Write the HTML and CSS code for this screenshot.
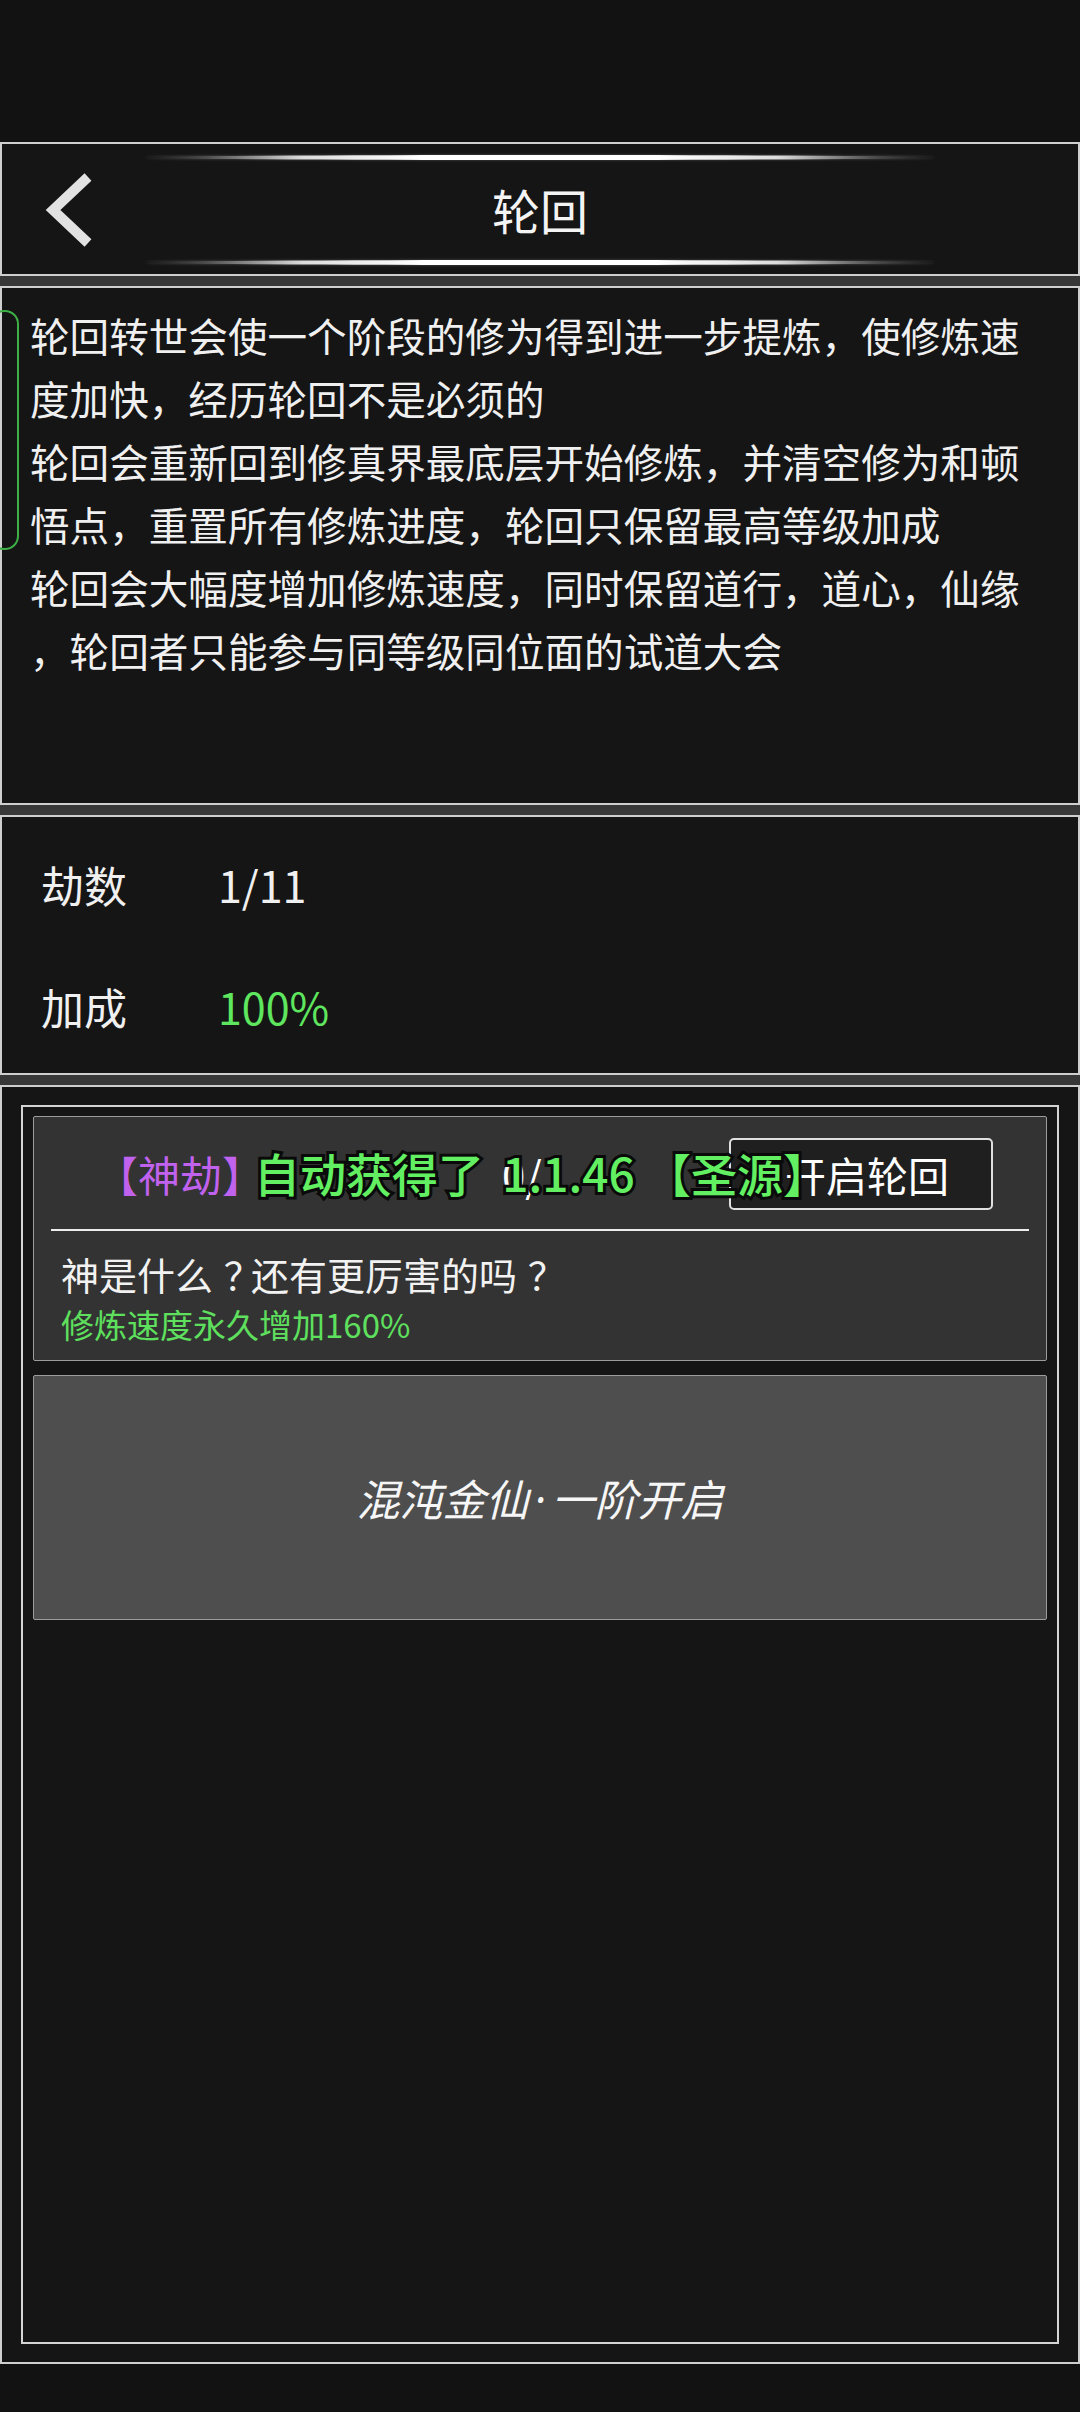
FILE: index.html
```html
<!DOCTYPE html>
<html lang="zh-CN">
<head>
<meta charset="utf-8">
<title>轮回</title>
<link rel="stylesheet" href="styles.css">
</head>
<body>
<div class="screen">
  <div class="status-space"></div>

  <header class="panel header">
    <div class="glow"></div>
    <div class="title-row">
      <div class="back">
        <svg width="60" height="80" viewBox="0 0 60 80">
          <polyline points="48,7 13,40 48,73" fill="none" stroke="#e2e2e2" stroke-width="10" stroke-linejoin="miter" stroke-linecap="butt"/>
        </svg>
      </div>
      <div class="title">轮回</div>
      <div></div>
    </div>
    <div class="glow"></div>
  </header>

  <div class="gap"></div>

  <section class="panel desc">
    <div class="bracket"></div>
    <p class="desc-text">轮回转世会使一个阶段的修为得到进一步提炼，使修炼速<br>度加快，经历轮回不是必须的<br>轮回会重新回到修真界最底层开始修炼，并清空修为和顿<br>悟点，重置所有修炼进度，轮回只保留最高等级加成<br>轮回会大幅度增加修炼速度，同时保留道行，道心，仙缘<br>，轮回者只能参与同等级同位面的试道大会</p>
  </section>

  <div class="gap"></div>

  <section class="panel stats">
    <div class="stat-row"><span class="stat-label">劫数</span><span class="stat-value">1/11</span></div>
    <div class="stat-row"><span class="stat-label">加成</span><span class="stat-value green">100%</span></div>
  </section>

  <div class="gap"></div>

  <section class="panel main">
    <div class="frame">
      <div class="card card-info">
        <div class="card-head">
          <span class="tag">【神劫】</span>
          <span class="count">0/1</span>
          <button class="btn">开启轮回</button>
          <div class="toast">自动获得了 <span class="toast-num">1.1.46</span> 【圣源】</div>
        </div>
        <div class="divider"></div>
        <div class="question">神是什<span class="pre-qm">么</span><span class="qm">？</span>还有更厉害的<span class="pre-qm">吗</span><span class="qm">？</span></div>
        <div class="bonus">修炼速度永久增加160%</div>
      </div>
      <div class="card card-level">
        <span class="level-text">混沌金仙<span class="dot">·</span>一阶开启</span>
      </div>
    </div>
  </section>
</div>
</body>
</html>
```

FILE: styles.css
```css
* { box-sizing: border-box; }

html, body {
  margin: 0;
  padding: 0;
  background: #121212;
}

body {
  width: 1080px;
  height: 2412px;
  overflow: hidden;
  font-family: "Noto Sans CJK SC", "Noto Sans", sans-serif;
  color: #f2f2f2;
}

.screen {
  display: flex;
  flex-direction: column;
}

.status-space {
  height: 142px;
}

.panel {
  border: 2px solid #cfcfcf;
  background: #151515;
  position: relative;
}

.gap {
  height: 10px;
  background: #383838;
}

/* header */
.header {
  height: 134px;
  padding-top: 11px;
  display: flex;
  flex-direction: column;
}

.glow {
  width: 790px;
  height: 5px;
  margin: 0 auto;
  border-radius: 50%;
  background: linear-gradient(90deg,
    rgba(255,255,255,0) 0%,
    rgba(255,255,255,0.25) 8%,
    rgba(255,255,255,0.85) 20%,
    #ffffff 35%,
    #ffffff 65%,
    rgba(255,255,255,0.85) 80%,
    rgba(255,255,255,0.25) 92%,
    rgba(255,255,255,0) 100%);
  box-shadow: 0 0 3px rgba(255,255,255,0.25);
}

.title-row {
  height: 100px;
  display: grid;
  grid-template-columns: 1fr auto 1fr;
  align-items: center;
}

.back {
  padding-left: 38px;
  display: flex;
  align-items: center;
}

.back svg { display: block; }

.title {
  font-size: 48px;
  line-height: 1;
  color: #f4f4f4;
  padding-bottom: 2px;
}

/* description */
.desc {
  height: 519px;
  padding: 15px 0 0 28px;
}

.bracket {
  position: absolute;
  left: -12px;
  top: 22px;
  width: 29px;
  height: 240px;
  border: 2px solid #3daf45;
  border-radius: 14px;
}

.desc-text {
  margin: 0;
  font-size: 39.6px;
  line-height: 63px;
  white-space: nowrap;
  color: #f0f0f0;
}

/* stats */
.stats {
  height: 260px;
  padding: 37px 0 37px 39px;
  display: flex;
  flex-direction: column;
  gap: 62px;
}

.stat-row {
  display: flex;
  align-items: center;
  height: 60px;
  font-size: 43px;
}

.stat-label {
  width: 177px;
  color: #f0f0f0;
}

.stat-value {
  color: #f0f0f0;
}

.green {
  color: #5fe65f;
}

/* main */
.main {
  height: 1279px;
  padding: 18px 19px;
}

.frame {
  height: 100%;
  border: 2px solid #d4d4d4;
  padding: 9px 10px;
  display: flex;
  flex-direction: column;
  gap: 14px;
}

.card {
  border: 1px solid #9c9c9c;
  border-radius: 2px;
}

.card-info {
  height: 245px;
  background: #333333;
  padding: 0 16px;
}

.card-head {
  position: relative;
  height: 112px;
  display: flex;
  align-items: center;
  padding-left: 46px;
}

.tag {
  font-size: 42px;
  color: #c062ee;
}

.count {
  font-size: 42px;
  color: #ffffff;
  margin-left: 238px;
}

.btn {
  margin-left: auto;
  margin-right: 37px;
  width: 264px;
  height: 72px;
  border: 2px solid #e0e0e0;
  border-radius: 5px;
  background: #1f1f1f;
  color: #ffffff;
  font-family: "Noto Sans CJK SC", "Noto Sans", sans-serif;
  font-size: 41px;
  padding: 0 0 0 12px;
  margin-top: 2px;
}

.toast {
  position: absolute;
  left: 204px;
  top: 0;
  bottom: 0;
  display: flex;
  align-items: center;
  white-space: pre;
  font-size: 46px;
  font-weight: 500;
  color: #62f062;
  -webkit-text-stroke: 6px #0a0a0a;
  paint-order: stroke fill;
  padding-bottom: 2px;
}

.toast-num {
  margin-left: 8px;
}

.divider {
  height: 2px;
  background: #ededed;
  margin: 0 1px;
}

.question {
  margin-top: 20px;
  padding-left: 11px;
  font-size: 38px;
  line-height: 46px;
  color: #f2f2f2;
}

.pre-qm {
  letter-spacing: 0.28em;
}

.qm {
  letter-spacing: -0.28em;
}

.bonus {
  margin-top: 7px;
  padding-left: 11px;
  font-size: 33px;
  line-height: 40px;
  color: #5ee05e;
}

.card-level {
  height: 245px;
  background: #4e4e4e;
  display: flex;
  align-items: center;
  justify-content: center;
}

.level-text {
  font-size: 43px;
  font-style: italic;
  color: #f6f6f6;
}

.dot {
  font-family: "Noto Sans", "DejaVu Sans", sans-serif;
  margin: 0 6px;
}
```
